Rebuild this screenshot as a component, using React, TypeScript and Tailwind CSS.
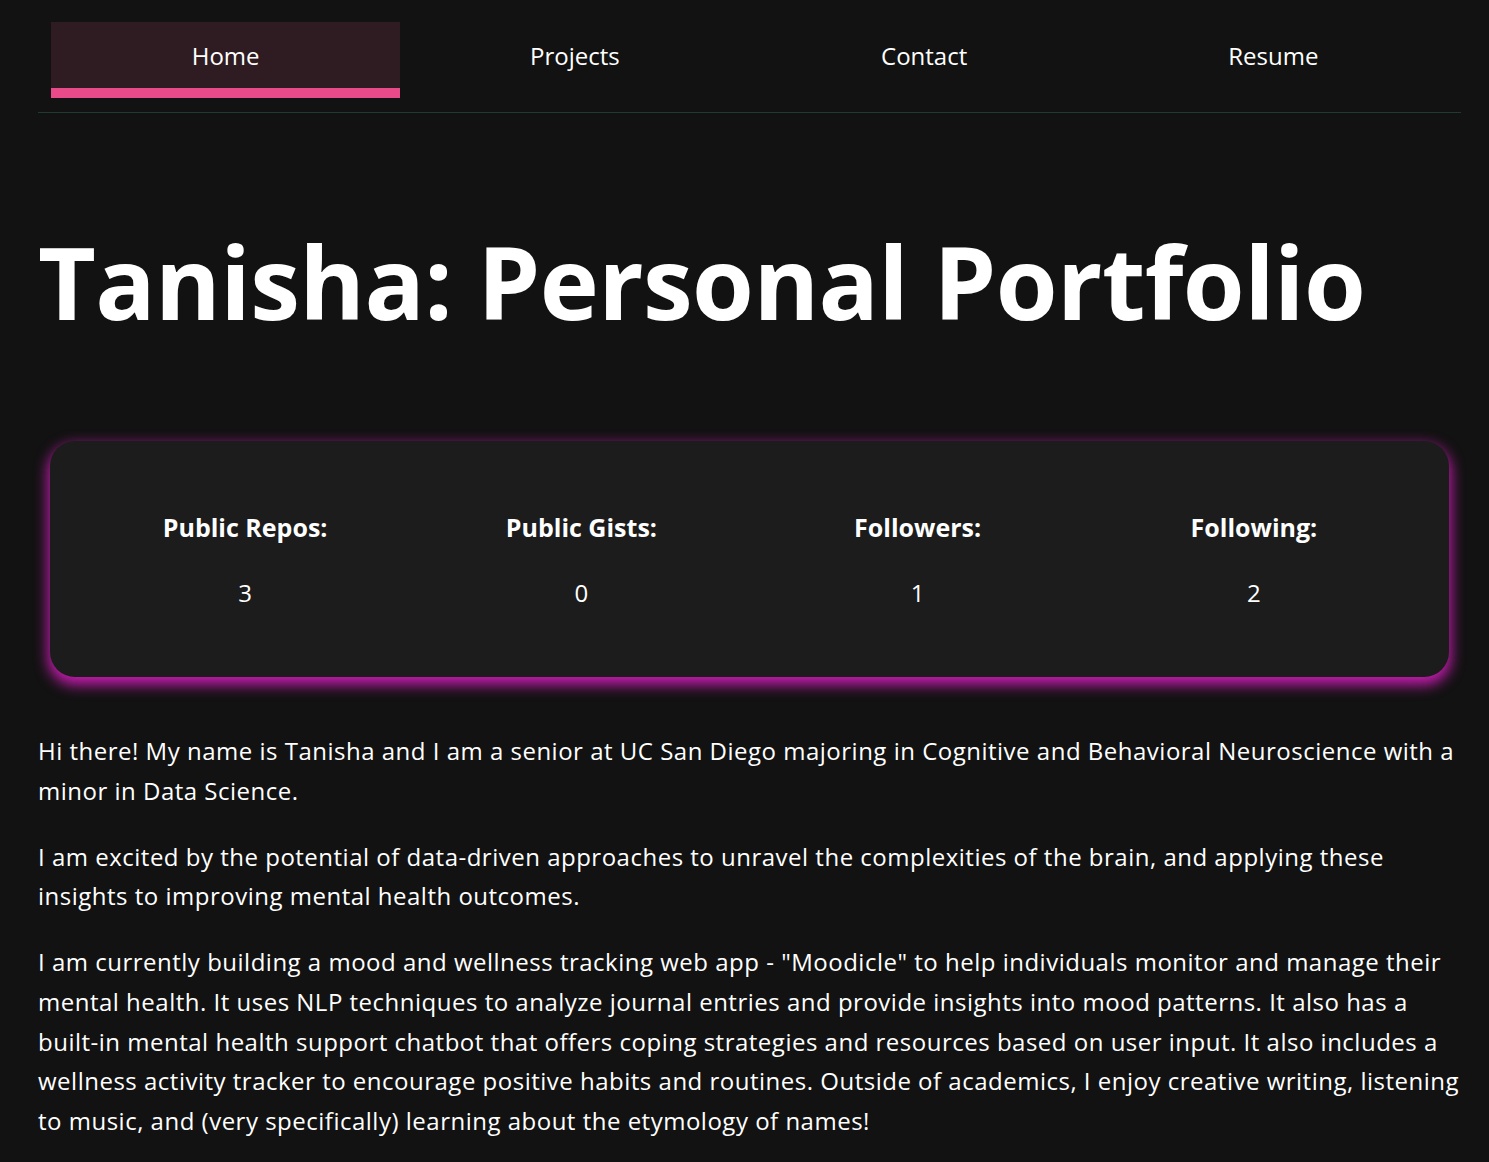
const tabs = ['Home', 'Projects', 'Contact', 'Resume'];

const stats = [
    { label: 'Public Repos:', value: 3 },
    { label: 'Public Gists:', value: 0 },
    { label: 'Followers:', value: 1 },
    { label: 'Following:', value: 2 },
];

/**
 * App
 * @returns {JSX.Element} portfolio home page
 */
export default function App(): JSX.Element {
    return (
        <div className="min-h-screen bg-[#121212] pl-[38px] pr-[28px] font-['Open_Sans',sans-serif] text-white">
            <nav className="grid grid-cols-4 border-b border-[#1f3a31] px-[13px] pb-[14px] pt-[22px]">
                {tabs.map((tab, i) => (
                    <a
                        key={tab}
                        className={
                            i === 0
                                ? 'flex h-[76px] items-center justify-center border-b-[10px] border-[#e94b8a] bg-[#2f1c22] pt-[2px] text-[24px]'
                                : 'flex h-[76px] items-center justify-center pb-[8px] text-[24px]'
                        }
                    >
                        {tab}
                    </a>
                ))}
            </nav>

            <h1 className="mt-[118px] text-[100px] font-bold leading-none tracking-[-0.6px]">Tanisha: Personal Portfolio</h1>

            <section className="mx-[12px] mt-[110px] h-[236px] rounded-[25px] bg-[#1c1c1c] px-[27px] pt-[70px] shadow-[0_6px_14px_2px_#c41cae]">
                <div className="grid grid-cols-4">
                    {stats.map((s) => (
                        <div key={s.label} className="flex flex-col items-center">
                            <h3 className="text-[25px] font-bold leading-[32px]">{s.label}</h3>
                            <p className="mt-[34px] text-[24px] leading-[32px]">{s.value}</p>
                        </div>
                    ))}
                </div>
            </section>

            <div className="mt-[54px] flex flex-col gap-[26px] text-[24px] leading-[39.75px] tracking-[0.5px]">
                <p>
                    Hi there! My name is Tanisha and I am a senior at UC San Diego majoring in Cognitive and Behavioral Neuroscience with a minor in Data
                    Science.
                </p>
                <p>
                    I am excited by the potential of data-driven approaches to unravel the complexities of the brain, and applying these insights to
                    improving mental health outcomes.
                </p>
                <p>
                    I am currently building a mood and wellness tracking web app - "Moodicle" to help individuals monitor and manage their mental health.
                    It uses NLP techniques to analyze journal entries and provide insights into mood patterns. It also has a built-in mental health
                    support chatbot that offers coping strategies and resources based on user input. It also includes a wellness activity tracker to
                    encourage positive habits and routines. Outside of academics, I enjoy creative writing, listening to music, and (very specifically)
                    learning about the etymology of names!
                </p>
            </div>
        </div>
    );
}
